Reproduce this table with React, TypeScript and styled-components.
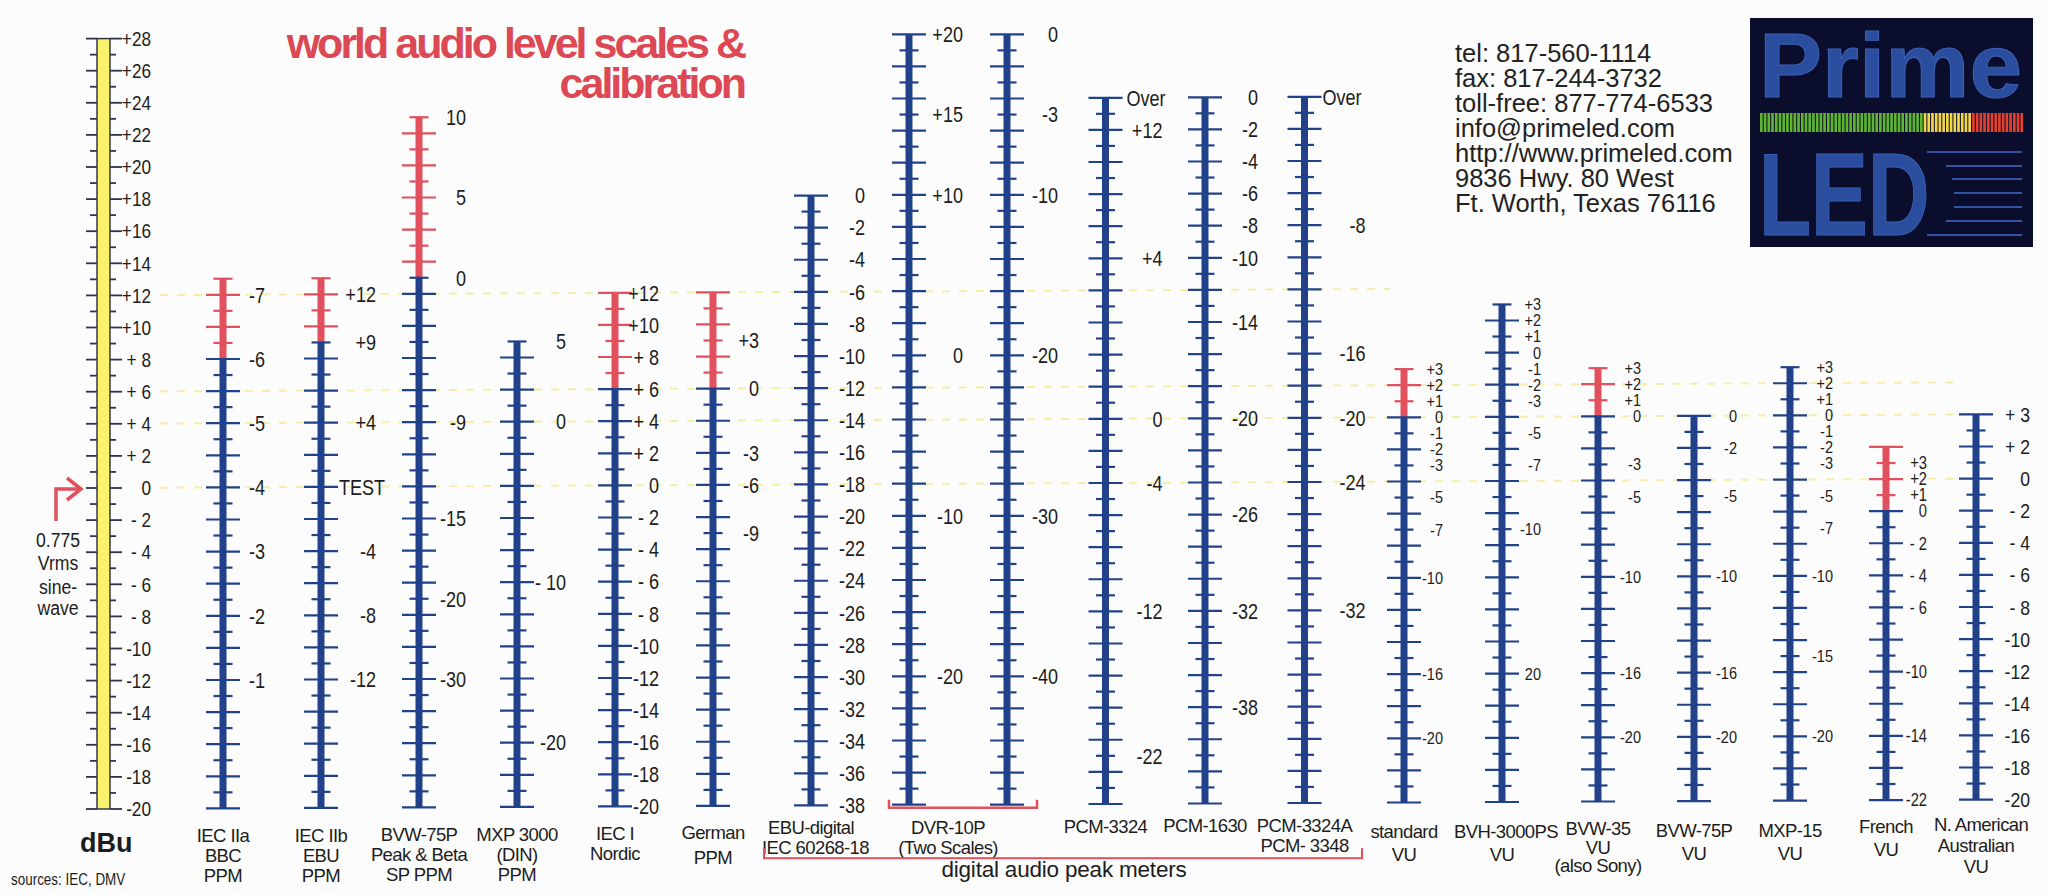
import React from "react";
import styled, { createGlobalStyle } from "styled-components";

const NAVY = "#21428a";
const RED = "#e0505d";
const INK = "#1d1d20";
const SANS = `"Liberation Sans", Arial, Helvetica, sans-serif`;

// dBu -> pixel row, shared by every scale on the sheet
const ZERO_Y = 488;
const PX_PER_DB = 16.05;
const SCALE_H = 822;
const yOf = (db: number) => ZERO_Y - PX_PER_DB * db;
// the scanned sheet is tilted a little: the right side sits higher
const liftAt = (x: number) => -0.005 * (x - 100);
// scale figures are set in a condensed face; squeeze the regular one
const SQUEEZE = 0.84;

type Mark = { at: number; text: string; start?: number };
type Meter = { x: number; top: number; red?: number; right: number; size: number; squeeze?: number; marks: Mark[] };

const fmt = (v: number) =>
  v > 0 ? (v >= 10 ? `+${v}` : `+ ${v}`) : v === 0 ? "0" : v <= -10 ? `${v}` : `- ${-v}`;
const sgn = (v: number) => (v > 0 ? `+${v}` : `${v}`);
const pairs = (list: [number, string][]): Mark[] => list.map(([at, text]) => ({ at, text }));
const range = (from: number, to: number, step: number) => {
  const out: number[] = [];
  for (let v = from; v >= to; v -= step) out.push(v);
  return out;
};

const GlobalStyle = createGlobalStyle`
  body {
    margin: 0;
    background: #fcfcfc;
  }
`;

const Page = styled.div`
  position: relative;
  width: 2048px;
  height: 895px;
  overflow: hidden;
  background: #fcfcfc;
  font-family: ${SANS};
  color: ${INK};
`;

const Guides = styled.svg`
  position: absolute;
  inset: 0;
  pointer-events: none;
`;

const Header = styled.header`
  position: absolute;
  top: 0;
  left: 0;
  right: 0;
  display: flex;
  align-items: flex-start;
  z-index: 2;
`;

const Title = styled.h1`
  flex: none;
  width: 744px;
  margin: 23px 0 0;
  text-align: right;
  font-size: 43px;
  font-weight: 700;
  line-height: 40px;
  letter-spacing: -3px;
  color: #dc4854;
`;

const Contact = styled.address`
  flex: none;
  margin: 41px 0 0 711px;
  font-style: normal;
  font-size: 25.5px;
  line-height: 25px;
  white-space: nowrap;
  color: #222;
`;

const Logo = styled.svg`
  display: block;
  flex: none;
  overflow: visible;
  margin: 18px 15px 0 auto;
`;

const LogoWord = styled.text<{ $size: number }>`
  font-family: ${SANS};
  font-weight: 700;
  font-size: ${(p) => p.$size}px;
  fill: #2b4d9d;
  stroke: #3b63b8;
  stroke-width: 1px;
`;

const Chart = styled.main`
  position: relative;
  z-index: 1;
  display: flex;
  align-items: flex-start;
`;

const Column = styled.section<{ $w: number; $lift: number }>`
  display: flex;
  flex-direction: column;
  width: ${(p) => p.$w}px;
  flex: none;
  transform: translateY(${(p) => p.$lift}px);
`;

const Scale = styled.svg`
  display: block;
  overflow: visible;
  width: 100%;
  height: ${SCALE_H}px;
`;

const Figure = styled.text<{ $size: number }>`
  font-family: ${SANS};
  font-size: ${(p) => p.$size}px;
  fill: ${INK};
`;

function ScaleText(props: { x: number; y: number; size: number; anchor?: "start" | "middle" | "end"; squeeze?: number; children: string }) {
  const { x, y, size, anchor = "end", squeeze = SQUEEZE, children } = props;
  return (
    <Figure $size={size} transform={`translate(${x} ${y}) scale(${squeeze} 1)`} textAnchor={anchor}>
      {children}
    </Figure>
  );
}

const Caption = styled.div<{ $mt?: number; $lh?: number; $shift?: number }>`
  margin-top: ${(p) => p.$mt ?? 5}px;
  padding-right: ${(p) => p.$shift ?? 0}px;
  text-align: center;
  font-size: 18.5px;
  letter-spacing: -0.6px;
  line-height: ${(p) => p.$lh ?? 20}px;
  white-space: nowrap;
`;

const UnitCaption = styled.div`
  margin-top: 6px;
  padding-left: 80px;
  font-size: 27px;
  font-weight: 700;
  line-height: 30px;
`;

const Sources = styled.div`
  margin-top: 13px;
  padding-left: 11px;
  font-size: 16px;
  line-height: 18px;
  white-space: nowrap;
  transform: scaleX(${SQUEEZE});
  transform-origin: 11px 0;
`;

const DigitalGroup = styled.div`
  display: flex;
  flex-direction: column;
  flex: none;
`;

const GroupRow = styled.div`
  display: flex;
  align-items: flex-start;
`;

const GroupFooter = styled.div<{ $lift: number }>`
  transform: translateY(${(p) => p.$lift}px);
`;

const Bracket = styled.div`
  height: 9px;
  margin: -9px -9px 0 1px;
  border: 2.5px solid ${RED};
  border-top: none;
`;

const GroupTitle = styled.div`
  padding-left: 12px;
  text-align: center;
  font-size: 22.5px;
  line-height: 22px;
  letter-spacing: -0.2px;
`;

function Bar({ m }: { m: Meter }) {
  const ticks: React.ReactNode[] = [];
  for (let db = -20; db <= m.top; db++) {
    const half = db % 2 === 0 ? 17 : 9.5;
    const hot = m.red !== undefined && db > m.red;
    ticks.push(
      <line key={db} x1={-half} x2={half} y1={yOf(db)} y2={yOf(db)} stroke={hot ? RED : NAVY} strokeWidth={2.2} />
    );
  }
  const split = m.red ?? m.top;
  return (
    <g transform={`translate(${m.x},0)`}>
      {m.red !== undefined && (
        <rect x={-3.5} width={7} y={yOf(m.top)} height={yOf(m.red) - yOf(m.top)} fill={RED} />
      )}
      <rect x={-3.5} width={7} y={yOf(split)} height={yOf(-20) - yOf(split)} fill={NAVY} />
      {ticks}
      {m.marks.map((k) => (
        <ScaleText
          key={`${k.text}${k.at}`}
          size={m.size}
          squeeze={m.squeeze}
          x={k.start ?? m.right}
          y={yOf(k.at) + m.size * 0.36}
          anchor={k.start !== undefined ? "start" : "end"}
        >
          {k.text}
        </ScaleText>
      ))}
    </g>
  );
}

type Spec = { w: number; center: number; bars: Meter[]; caption: string[]; mt?: number; lh?: number; shift?: number; extra?: React.ReactNode };

function MeterColumn({ s }: { s: Spec }) {
  return (
    <Column $w={s.w} $lift={liftAt(s.center)}>
      <Scale viewBox={`0 0 ${s.w} ${SCALE_H}`}>
        {s.bars.map((b, i) => (
          <Bar key={i} m={b} />
        ))}
        {s.extra}
      </Scale>
      <Caption $mt={s.mt} $lh={s.lh} $shift={s.shift}>
        {s.caption.map((line) => (
          <div key={line}>{line}</div>
        ))}
      </Caption>
    </Column>
  );
}

const one = (w: number, m: Omit<Meter, "x">): Meter[] => [{ ...m, x: w / 2 }];
const PPM = 21.5;
const VU = 16.5;
const VU_SQ = 0.88;

const leftMeters: Spec[] = [
  {
    w: 98, center: 223, caption: ["IEC IIa", "BBC", "PPM"],
    bars: one(98, { top: 13, red: 8, right: 42, size: PPM, marks: range(12, -12, 4).map((at, i) => ({ at, text: `-${7 - i}` })) }),
  },
  {
    w: 98, center: 321, caption: ["IEC IIb", "EBU", "PPM"],
    bars: one(98, {
      top: 13, red: 9, right: 55, size: PPM,
      marks: [...pairs([[12, "+12"], [9, "+9"], [4, "+4"], [-4, "-4"], [-8, "-8"], [-12, "-12"]]), { at: 0, text: "TEST", start: 18 }],
    }),
  },
  {
    w: 98, center: 418, caption: ["BVW-75P", "Peak & Beta", "SP PPM"],
    bars: one(98, { top: 23, red: 13, right: 47, size: PPM, marks: pairs([[23, "10"], [18, "5"], [13, "0"], [4, "-9"], [-2, "-15"], [-7, "-20"], [-12, "-30"]]) }),
  },
  {
    w: 98, center: 517, caption: ["MXP 3000", "(DIN)", "PPM"],
    bars: one(98, { top: 9, right: 49, size: PPM, marks: pairs([[9, "5"], [4, "0"], [-6, "- 10"], [-16, "-20"]]) }),
  },
  {
    w: 98, center: 616, caption: ["IEC I", "Nordic"],
    bars: one(98, { top: 12, red: 6, right: 44, size: PPM, marks: range(12, -20, 2).map((v) => ({ at: v, text: fmt(v) })) }),
  },
  {
    w: 98, center: 714, caption: ["German", "PPM"], mt: 1, lh: 25,
    bars: one(98, { top: 12, red: 6, right: 46, size: PPM, marks: pairs([[9, "+3"], [6, "0"], [2, "-3"], [0, "-6"], [-3, "-9"]]) }),
  },
];

const digitalMeters: Spec[] = [
  {
    w: 98, center: 811, caption: ["EBU-digital", "IEC 60268-18"], mt: 0,
    bars: one(98, { top: 18, right: 54, size: PPM, marks: range(0, -38, 2).map((v) => ({ at: v + 18, text: `${v}` })) }),
  },
  {
    w: 196, center: 958, caption: ["DVR-10P", "(Two Scales)"], mt: 0, shift: 20,
    bars: [
      { x: 49, top: 28, right: 54, size: PPM, marks: pairs([[28, "+20"], [23, "+15"], [18, "+10"], [8, "0"], [-2, "-10"], [-12, "-20"]]) },
      { x: 147, top: 28, right: 51, size: PPM, marks: pairs([[28, "0"], [23, "-3"], [18, "-10"], [8, "-20"], [-2, "-30"], [-12, "-40"]]) },
    ],
    extra: <path d="M29 804 V812 H177 V804" fill="none" stroke={RED} strokeWidth={2.5} />,
  },
  {
    w: 99, center: 1105, caption: ["PCM-3324"], mt: 0,
    bars: one(99, {
      top: 24, right: 57, size: PPM,
      marks: [{ at: 24, text: "Over", start: 21 }, ...pairs([[22, "+12"], [14, "+4"], [4, "0"], [0, "-4"], [-8, "-12"], [-17, "-22"]])],
    }),
  },
  {
    w: 100, center: 1205, caption: ["PCM-1630"], mt: 0,
    bars: one(100, { top: 24, right: 53, size: PPM, marks: [0, -2, -4, -6, -8, -10, -14, -20, -26, -32, -38].map((v) => ({ at: v + 24, text: `${v}` })) }),
  },
  {
    w: 99, center: 1304, caption: ["PCM-3324A", "PCM- 3348"], mt: 0,
    bars: one(99, {
      top: 24, right: 61, size: PPM,
      marks: [{ at: 24, text: "Over", start: 18 }, ...pairs([[16, "-8"], [8, "-16"], [4, "-20"], [0, "-24"], [-8, "-32"]])],
    }),
  },
];

// VU readings sit at (reading + offset) dBu
const vuMarks = (list: number[], offset: number): Mark[] => list.map((v) => ({ at: v + offset, text: sgn(v) }));

const vuMeters: Spec[] = [
  {
    w: 100, center: 1404, caption: ["standard", "VU"], lh: 23,
    bars: one(100, { top: 7, red: 4, right: 39, size: VU, squeeze: VU_SQ, marks: vuMarks([3, 2, 1, 0, -1, -2, -3, -5, -7, -10, -16, -20], 4) }),
  },
  {
    w: 96, center: 1502, caption: ["BVH-3000PS", "VU"], lh: 23,
    bars: one(96, {
      top: 11, right: 39, size: VU, squeeze: VU_SQ,
      marks: [...vuMarks([3, 2, 1, 0, -1, -2, -3, -5, -7], 8), { at: -3, text: "-10" }, { at: -12, text: "20" }],
    }),
  },
  {
    w: 96, center: 1598, caption: ["BVW-35", "VU", "(also Sony)"], lh: 18.5,
    bars: one(96, { top: 7, red: 4, right: 43, size: VU, squeeze: VU_SQ, marks: vuMarks([3, 2, 1, 0, -3, -5, -10, -16, -20], 4) }),
  },
  {
    w: 96, center: 1694, caption: ["BVW-75P", "VU"], lh: 23,
    bars: one(96, { top: 4, right: 43, size: VU, squeeze: VU_SQ, marks: vuMarks([0, -2, -5, -10, -16, -20], 4) }),
  },
  {
    w: 96, center: 1790, caption: ["MXP-15", "VU"], lh: 23,
    bars: one(96, { top: 7, right: 43, size: VU, squeeze: VU_SQ, marks: vuMarks([3, 2, 1, 0, -1, -2, -3, -5, -7, -10, -15, -20], 4) }),
  },
  {
    w: 96, center: 1886, caption: ["French", "VU"], mt: 2, lh: 23,
    bars: one(96, {
      top: 2, red: -2, right: 41, size: 17.5,
      marks: pairs([[1, "+3"], [0, "+2"], [-1, "+1"], [-2, "0"], [-4, "- 2"], [-6, "- 4"], [-8, "- 6"], [-12, "-10"], [-16, "-14"], [-20, "-22"]]),
    }),
  },
  {
    w: 84, center: 1976, caption: ["N. American", "Australian", "VU"], mt: 1, lh: 21,
    bars: one(84, {
      top: 4, right: 54, size: 21,
      marks: [{ at: 4, text: "+ 3" }, { at: 2, text: "+ 2" }, ...range(0, -20, 2).map((v) => ({ at: v, text: fmt(v) }))],
    }),
  },
];

function DbuScale() {
  const ticks: React.ReactNode[] = [];
  for (let db = -20; db <= 28; db++) {
    const long = db % 2 === 0;
    ticks.push(
      <g key={db} stroke="#2b3553" strokeWidth={1.8}>
        <line x1={long ? 86 : 90} x2={97} y1={yOf(db)} y2={yOf(db)} />
        <line x1={110} x2={long ? 122 : 116} y1={yOf(db)} y2={yOf(db)} />
      </g>
    );
  }
  return (
    <Column $w={174} $lift={0}>
      <Scale viewBox={`0 0 174 ${SCALE_H}`}>
        <rect x={97} y={yOf(28)} width={13} height={yOf(-20) - yOf(28)} fill="#f8f26e" stroke="#2d2d3a" strokeWidth={1.4} />
        {ticks}
        {range(28, -20, 2).map((db) => (
          <ScaleText key={db} size={20} squeeze={0.86} x={151} y={yOf(db) + 7.2}>
            {fmt(db)}
          </ScaleText>
        ))}
        <path d="M56 521 V489 H80" fill="none" stroke={RED} strokeWidth={3.5} />
        <polyline points="67,478 81,489 67,500" fill="none" stroke={RED} strokeWidth={3.5} />
        {["0.775", "Vrms", "sine-", "wave"].map((t, i) => (
          <ScaleText key={t} size={21} x={58} y={[547, 570, 594, 615][i]} anchor="middle">
            {t}
          </ScaleText>
        ))}
      </Scale>
      <UnitCaption>dBu</UnitCaption>
      <Sources>sources: IEC, DMV</Sources>
    </Column>
  );
}

function GuideLines() {
  const lines: [number, number, number][] = [
    [12, 160, 1390],
    [6, 160, 1955],
    [4, 160, 1955],
    [0, 160, 1955],
  ];
  return (
    <Guides width={2048} height={895}>
      {lines.map(([db, x1, x2]) => (
        <line
          key={db}
          x1={x1}
          x2={x2}
          y1={yOf(db) + liftAt(x1)}
          y2={yOf(db) + liftAt(x2)}
          stroke="#f4efa8"
          strokeWidth={2}
          strokeDasharray="8 9"
        />
      ))}
    </Guides>
  );
}

function PrimeLogo() {
  const leds: React.ReactNode[] = [];
  for (let x = 10, i = 0; x < 272; x += 3.72, i++) {
    const fill = x < 172 ? "#5fb52f" : x < 222 ? "#f1d64a" : "#e2412c";
    leds.push(<rect key={i} x={x} y={95} width={2.7} height={19} fill={fill} />);
  }
  const rules: [number, number][] = [
    [134, 177], [148, 196], [161, 202], [175, 204], [189, 204], [203, 196], [217, 177],
  ];
  return (
    <Logo width={283} height={229} viewBox="0 0 283 229">
      <rect width={283} height={229} fill="#0a0d2b" />
      <LogoWord $size={91} transform="translate(9 79) scale(1.04 1)">
        Prime
      </LogoWord>
      {leds}
      <LogoWord $size={116} transform="translate(9 217) scale(0.735 1)">
        LED
      </LogoWord>
      {rules.map(([y, x]) => (
        <line key={y} x1={x} x2={272} y1={y} y2={y} stroke="#2f52a2" strokeWidth={2} />
      ))}
    </Logo>
  );
}

export default function App() {
  return (
    <Page>
      <GlobalStyle />
      <GuideLines />
      <Header>
        <Title>
          world audio level scales &amp;
          <br />
          calibration
        </Title>
        <Contact>
          tel: 817-560-1114
          <br />
          fax: 817-244-3732
          <br />
          toll-free: 877-774-6533
          <br />
          info@primeled.com
          <br />
          http://www.primeled.com
          <br />
          9836 Hwy. 80 West
          <br />
          Ft. Worth, Texas 76116
        </Contact>
        <PrimeLogo />
      </Header>
      <Chart>
        <DbuScale />
        {leftMeters.map((s) => (
          <MeterColumn key={s.center} s={s} />
        ))}
        <DigitalGroup>
          <GroupRow>
            {digitalMeters.map((s) => (
              <MeterColumn key={s.center} s={s} />
            ))}
          </GroupRow>
          <GroupFooter $lift={liftAt(1060)}>
            <Bracket />
            <GroupTitle>digital audio peak meters</GroupTitle>
          </GroupFooter>
        </DigitalGroup>
        {vuMeters.map((s) => (
          <MeterColumn key={s.center} s={s} />
        ))}
      </Chart>
    </Page>
  );
}
